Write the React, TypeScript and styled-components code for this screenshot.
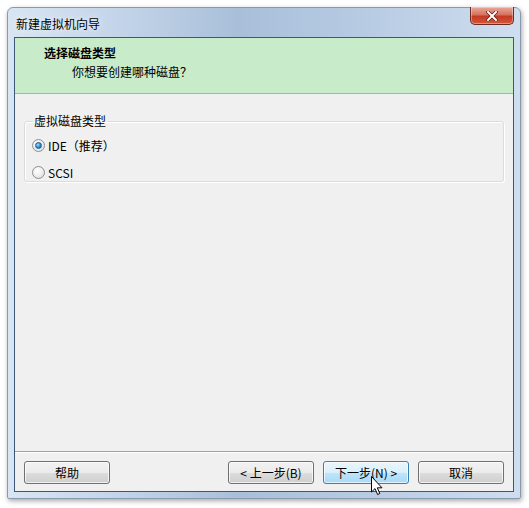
import styled, { createGlobalStyle } from 'styled-components';

const GlobalStyle = createGlobalStyle`
  html, body {
    margin: 0;
    padding: 0;
    background: #ffffff;
  }
  body {
    font-family: "Noto Sans CJK SC", "DejaVu Sans", sans-serif;
    font-size: 12px;
    color: #000;
  }
`;

const Page = styled.div`
  width: 529px;
  height: 508px;
  padding: 7px 0 0 7px;
  box-sizing: border-box;
  position: relative;
`;

const Window = styled.div`
  width: 514px;
  height: 492px;
  box-sizing: border-box;
  display: flex;
  flex-direction: column;
  border: 1px solid #8a9aae;
  border-radius: 6px 6px 2px 2px;
  background: linear-gradient(90deg, #d8e5f2 0%, #c5d6ea 20%, #a9bfd9 45%, #b7cbe3 70%, #cfdeef 100%);
  box-shadow: 1px 2px 5px rgba(0, 0, 0, 0.35);
`;

const TitleBar = styled.div`
  height: 29px;
  display: flex;
  justify-content: space-between;
  align-items: flex-start;
  padding: 0 6px 0 8px;
`;

const Title = styled.span`
  margin-top: 7px;
  font-size: 12px;
  color: #000;
  text-shadow: 0 0 6px rgba(255, 255, 255, 0.9);
`;

const CloseButton = styled.div`
  width: 44px;
  height: 18px;
  margin-top: -1px;
  box-sizing: border-box;
  border: 1px solid #6b2a22;
  border-top: none;
  border-radius: 0 0 5px 5px;
  background: linear-gradient(180deg, #e9a99c 0%, #d8725f 45%, #c53a22 55%, #d2583d 100%);
  display: flex;
  align-items: center;
  justify-content: center;
  box-shadow: inset 0 0 0 1px rgba(255, 255, 255, 0.35);
`;

const Client = styled.div`
  flex: 1;
  margin: 0 6px 6px 6px;
  border: 1px solid #3c5779;
  background: #f0f0f0;
  display: flex;
  flex-direction: column;
`;

const Header = styled.div`
  height: 56px;
  box-sizing: border-box;
  background: #c8ecca;
  border-bottom: 1px solid #a2b9a4;
  padding: 7px 0 0 29px;
`;

const HeaderTitle = styled.div`
  font-weight: bold;
  line-height: 16px;
`;

const HeaderSub = styled.div`
  margin: 3px 0 0 28px;
  line-height: 16px;
`;

const Body = styled.div`
  flex: 1;
  padding: 20px 9px 0 9px;
`;

const Group = styled.fieldset`
  margin: 0;
  padding: 4px 8px 4px 7px;
  height: 68px;
  box-sizing: border-box;
  border: 1px solid #dcdcdc;
  border-radius: 3px;
  box-shadow: inset 1px 1px 0 #ffffff, 1px 1px 0 #ffffff;
`;

const Legend = styled.legend`
  padding: 0 1px;
  margin-left: 1px;
  line-height: 14px;
`;

const Option = styled.label`
  display: flex;
  align-items: center;
  height: 27px;
  gap: 3px;
`;

const Radio = styled.span<{ $checked?: boolean }>`
  width: 13px;
  height: 13px;
  box-sizing: border-box;
  border-radius: 50%;
  border: 1px solid #8e8f8f;
  background: radial-gradient(circle at 40% 35%, #ffffff 0%, #f2f2f2 40%, #d8d8d8 100%);
  display: flex;
  align-items: center;
  justify-content: center;
  &::after {
    content: '';
    display: ${p => (p.$checked ? 'block' : 'none')};
    width: 5px;
    height: 5px;
    border-radius: 50%;
    background: radial-gradient(circle at 35% 35%, #9fdcff 0%, #2a8bd4 55%, #11538c 100%);
    border: 1px solid #1c5c93;
  }
`;

const Separator = styled.div`
  height: 1px;
  background: #a0a0a0;
  border-bottom: 1px solid #ffffff;
`;

const ButtonRow = styled.div`
  height: 38px;
  display: flex;
  align-items: center;
  padding: 0 9px;
  gap: 9px;
`;

const Spacer = styled.div`
  flex: 1;
`;

const Button = styled.div<{ $hover?: boolean }>`
  width: 86px;
  height: 23px;
  box-sizing: border-box;
  border-radius: 3px;
  border: 1px solid ${p => (p.$hover ? '#3c7fb1' : '#707070')};
  background: ${p =>
    p.$hover
      ? 'linear-gradient(180deg, #eaf6fd 0%, #d9f0fc 50%, #bee6fd 50%, #a7d9f5 100%)'
      : 'linear-gradient(180deg, #f2f2f2 0%, #ebebeb 50%, #dddddd 50%, #cfcfcf 100%)'};
  box-shadow: inset 0 0 0 1px rgba(255, 255, 255, 0.7);
  display: flex;
  align-items: center;
  justify-content: center;
  font-size: 12px;
  color: #000;
`;

const Cursor = styled.svg`
  position: absolute;
  left: 371px;
  top: 476px;
`;

export default function App() {
  return (
    <>
      <GlobalStyle />
      <Page>
        <Window>
          <TitleBar>
            <Title>新建虚拟机向导</Title>
            <CloseButton>
              <svg width="12" height="10" viewBox="0 0 12 10">
                <path d="M2 1 L10 9 M10 1 L2 9" stroke="#5a1a10" strokeWidth="3.4" strokeLinecap="square" />
                <path d="M2 1 L10 9 M10 1 L2 9" stroke="#ffffff" strokeWidth="2" strokeLinecap="square" />
              </svg>
            </CloseButton>
          </TitleBar>
          <Client>
            <Header>
              <HeaderTitle>选择磁盘类型</HeaderTitle>
              <HeaderSub>你想要创建哪种磁盘？</HeaderSub>
            </Header>
            <Body>
              <Group>
                <Legend>虚拟磁盘类型</Legend>
                <Option>
                  <Radio $checked />
                  <span>IDE（推荐）</span>
                </Option>
                <Option>
                  <Radio />
                  <span>SCSI</span>
                </Option>
              </Group>
            </Body>
            <Separator />
            <ButtonRow>
              <Button>帮助</Button>
              <Spacer />
              <Button>&lt; 上一步(B)</Button>
              <Button $hover>下一步(N) &gt;</Button>
              <Button>取消</Button>
            </ButtonRow>
          </Client>
        </Window>
        <Cursor width="13" height="20" viewBox="0 0 13 20">
          <path d="M0.5 0.5 L0.5 16 L4 12.6 L6.6 18.5 L8.8 17.5 L6.3 11.8 L11 11.8 Z" fill="#ffffff" stroke="#000000" strokeWidth="1" strokeLinejoin="miter" />
        </Cursor>
      </Page>
    </>
  );
}
